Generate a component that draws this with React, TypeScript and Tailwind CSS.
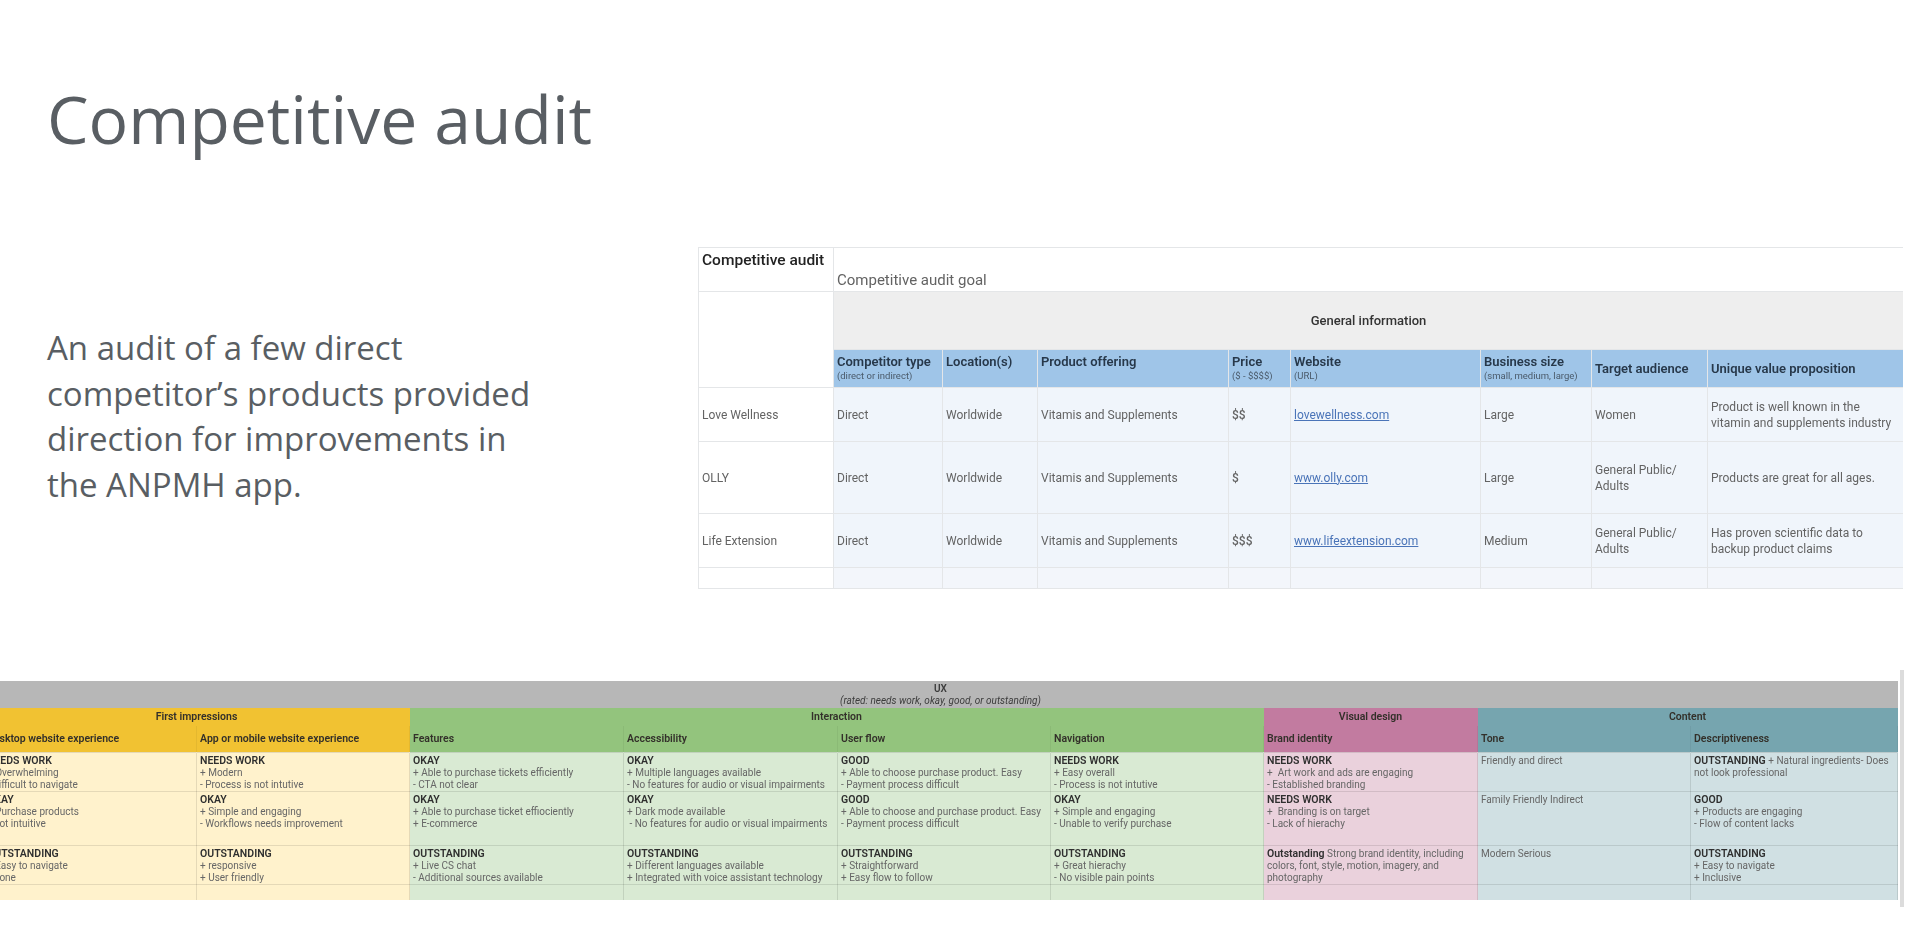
const audit = [
  {
    name: "Love Wellness",
    price: "$$",
    site: "lovewellness.com",
    size: "Large",
    audience: ["Women"],
    value: ["Product is well known in the", "vitamin and supplements industry"],
    rowClass: "h-[54px]",
  },
  {
    name: "OLLY",
    price: "$",
    site: "www.olly.com",
    size: "Large",
    audience: ["General Public/", "Adults"],
    value: ["Products are great for all ages."],
    rowClass: "h-[72px]",
  },
  {
    name: "Life Extension",
    price: "$$$",
    site: "www.lifeextension.com",
    size: "Medium",
    audience: ["General Public/", "Adults"],
    value: ["Has proven scientific data to", "backup product claims"],
    rowClass: "h-[54px]",
  },
];

const columnHeads = [
  { title: "Competitor type", sub: "(direct or indirect)" },
  { title: "Location(s)", sub: " " },
  { title: "Product offering", sub: " " },
  { title: "Price", sub: "($ - $$$$)" },
  { title: "Website", sub: "(URL)" },
  { title: "Business size", sub: "(small, medium, large)" },
];

type Rating = { head?: string; lead?: string; inline?: string; lines?: string[]; plain?: string };

const uxColumns = [
  { tint: "bg-[#fff2cc]", strong: "bg-[#f1c232]" },
  { tint: "bg-[#fff2cc]", strong: "bg-[#f1c232]" },
  { tint: "bg-[#d9ead3]", strong: "bg-[#93c47d]" },
  { tint: "bg-[#d9ead3]", strong: "bg-[#93c47d]" },
  { tint: "bg-[#d9ead3]", strong: "bg-[#93c47d]" },
  { tint: "bg-[#d9ead3]", strong: "bg-[#93c47d]" },
  { tint: "bg-[#ead1dc]", strong: "bg-[#c27ba0]" },
  { tint: "bg-[#d0e0e3]", strong: "bg-[#76a5af]" },
  { tint: "bg-[#d0e0e3]", strong: "bg-[#76a5af]" },
];

const uxHeads = [
  "Desktop website experience",
  "App or mobile website experience",
  "Features",
  "Accessibility",
  "User flow",
  "Navigation",
  "Brand identity",
  "Tone",
  "Descriptiveness",
];

const uxRows: { rowClass: string; cells: Rating[] }[] = [
  {
    rowClass: "h-[38px]",
    cells: [
      { head: "NEEDS WORK", lines: ["+ Overwhelming", "- Difficult to navigate"] },
      { head: "NEEDS WORK", lines: ["+ Modern", "- Process is not intutive"] },
      { head: "OKAY", lines: ["+ Able to purchase tickets efficiently", "- CTA not clear"] },
      { head: "OKAY", lines: ["+ Multiple languages available", "- No features for audio or visual impairments"] },
      { head: "GOOD", lines: ["+ Able to choose purchase product. Easy", "- Payment process difficult"] },
      { head: "NEEDS WORK", lines: ["+ Easy overall", "- Process is not intutive"] },
      { head: "NEEDS WORK", lines: ["+  Art work and ads are engaging", "- Established branding"] },
      { plain: "Friendly and direct" },
      { lead: "OUTSTANDING", inline: " + Natural ingredients- Does not look professional" },
    ],
  },
  {
    rowClass: "h-[54px]",
    cells: [
      { head: "OKAY", lines: ["+ Purchase products", "- Not intuitive"] },
      { head: "OKAY", lines: ["+ Simple and engaging", "- Workflows needs improvement"] },
      { head: "OKAY", lines: ["+ Able to purchase ticket effiociently", "+ E-commerce"] },
      { head: "OKAY", lines: ["+ Dark mode available", " - No features for audio or visual impairments"] },
      { head: "GOOD", lines: ["+ Able to choose and purchase product. Easy", "- Payment process difficult"] },
      { head: "OKAY", lines: ["+ Simple and engaging", "- Unable to verify purchase"] },
      { head: "NEEDS WORK", lines: ["+  Branding is on target", "- Lack of hierachy"] },
      { plain: "Family Friendly Indirect" },
      { head: "GOOD", lines: ["+ Products are engaging", "- Flow of content lacks"] },
    ],
  },
  {
    rowClass: "h-[39px]",
    cells: [
      { head: "OUTSTANDING", lines: ["+ Easy to navigate", "- None"] },
      { head: "OUTSTANDING", lines: ["+ responsive", "+ User friendly"] },
      { head: "OUTSTANDING", lines: ["+ Live CS chat", "- Additional sources available"] },
      { head: "OUTSTANDING", lines: ["+ Different languages available", "+ Integrated with voice assistant technology"] },
      { head: "OUTSTANDING", lines: ["+ Straightforward", "+ Easy flow to follow"] },
      { head: "OUTSTANDING", lines: ["+ Great hierachy", "- No visible pain points"] },
      { lead: "Outstanding", inline: " Strong brand identity, including colors, font, style, motion, imagery, and photography" },
      { plain: "Modern Serious" },
      { head: "OUTSTANDING", lines: ["+ Easy to navigate", "+ Inclusive"] },
    ],
  },
];

const RatingCell = ({ cell }: { cell: Rating }) => {
  if (cell.plain) return <span>{cell.plain}</span>;
  if (cell.lead) {
    return (
      <span>
        <b className="text-[10.5px] font-semibold text-[#2f2f2f]">{cell.lead}</b>
        {cell.inline}
      </span>
    );
  }
  return (
    <>
      <div className="text-[10.5px] font-semibold text-[#2f2f2f]">{cell.head}</div>
      {cell.lines?.map((line) => (
        <div key={line} className="whitespace-pre">{line}</div>
      ))}
    </>
  );
};

const CompetitorTable = () => (
  <table className="w-[1205px] table-fixed border-collapse font-['Roboto',sans-serif] text-[12px] leading-[16px] text-[#636363] blur-[0.4px] [&_td]:border [&_td]:border-[#e4e6e8] [&_td:last-child]:border-r-0">
    <colgroup>
      <col className="w-[135px]" />
      <col className="w-[109px]" />
      <col className="w-[95px]" />
      <col className="w-[191px]" />
      <col className="w-[62px]" />
      <col className="w-[190px]" />
      <col className="w-[111px]" />
      <col className="w-[116px]" />
      <col />
    </colgroup>
    <tbody>
      <tr className="h-[44px]">
        <td className="px-[3px] pb-[20px] text-[15.5px] font-medium text-[#222]">Competitive audit</td>
        <td colSpan={8} className="px-[3px] pt-[20px] text-[15px]">Competitive audit goal</td>
      </tr>
      <tr className="h-[58px]">
        <td rowSpan={2} />
        <td colSpan={8} className="bg-[#eeeeee] text-center text-[13px] font-medium text-[#333]">General information</td>
      </tr>
      <tr className="h-[38px] bg-[#9fc5e8] text-[13px] text-[#27384a]">
        {columnHeads.map((head) => (
          <td key={head.title} className="px-[3px] align-top pt-1">
            <div className="font-semibold leading-[16px]">{head.title}</div>
            <div className="text-[9.5px] leading-[12px] whitespace-pre text-[#4a5a6a]">{head.sub}</div>
          </td>
        ))}
        <td className="px-[3px] font-semibold">Target audience</td>
        <td className="px-[3px] font-semibold">Unique value proposition</td>
      </tr>
      {audit.map((row) => (
        <tr key={row.name} className={row.rowClass}>
          <td className="px-[3px]">{row.name}</td>
          <td className="bg-[#f0f5fb] px-[3px]">Direct</td>
          <td className="bg-[#f0f5fb] px-[3px]">Worldwide</td>
          <td className="bg-[#f0f5fb] px-[3px]">Vitamis and Supplements</td>
          <td className="bg-[#f0f5fb] px-[3px] font-medium">{row.price}</td>
          <td className="bg-[#f0f5fb] px-[3px] text-[#4a74b8] underline">{row.site}</td>
          <td className="bg-[#f0f5fb] px-[3px]">{row.size}</td>
          <td className="bg-[#f0f5fb] px-[3px]">
            {row.audience.map((line) => (
              <div key={line}>{line}</div>
            ))}
          </td>
          <td className="bg-[#f0f5fb] px-[3px]">
            {row.value.map((line) => (
              <div key={line}>{line}</div>
            ))}
          </td>
        </tr>
      ))}
      <tr className="h-[21px]">
        <td />
        <td className="bg-[#f3f6fb]" />
        <td className="bg-[#f3f6fb]" />
        <td className="bg-[#f3f6fb]" />
        <td className="bg-[#f3f6fb]" />
        <td className="bg-[#f3f6fb]" />
        <td className="bg-[#f3f6fb]" />
        <td className="bg-[#f3f6fb]" />
        <td className="bg-[#f3f6fb]" />
      </tr>
    </tbody>
  </table>
);

const UxTable = () => (
  <table className="w-[1915px] shrink-0 table-fixed border-collapse font-['Roboto',sans-serif] text-[10px] leading-[12px] text-[#666666] blur-[0.4px]">
    <colgroup>
      <col className="w-[213px]" />
      <col className="w-[213px]" />
      <col className="w-[214px]" />
      <col className="w-[214px]" />
      <col className="w-[213px]" />
      <col className="w-[213px]" />
      <col className="w-[214px]" />
      <col className="w-[213px]" />
      <col />
    </colgroup>
    <tbody>
      <tr className="h-[27px] bg-[#b7b7b7] text-center leading-[12px] text-[#3c3c3c]">
        <td colSpan={9}>
          <div className="font-semibold">UX</div>
          <div className="italic">(rated: needs work, okay, good, or outstanding)</div>
        </td>
      </tr>
      <tr className="h-[18px] text-center text-[10.5px] font-semibold text-[#33302a]">
        <td colSpan={2} className="bg-[#f1c232]">First impressions</td>
        <td colSpan={4} className="bg-[#93c47d]">Interaction</td>
        <td className="bg-[#c27ba0]">Visual design</td>
        <td colSpan={2} className="bg-[#76a5af]">Content</td>
      </tr>
      <tr className="h-[26px] text-[10.5px] font-semibold text-[#33302a]">
        {uxHeads.map((head, i) => (
          <td key={head} className={`${uxColumns[i].strong} border-x border-black/5 px-[3px]`}>{head}</td>
        ))}
      </tr>
      {uxRows.map((row) => (
        <tr key={row.rowClass + row.cells[2].lines?.[0]} className={row.rowClass}>
          {row.cells.map((cell, i) => (
            <td key={i} className={`${uxColumns[i].tint} border border-black/10 px-[3px] pt-[2px] align-top`}>
              <RatingCell cell={cell} />
            </td>
          ))}
        </tr>
      ))}
      <tr className="h-[16px]">
        {uxColumns.map((col, i) => (
          <td key={i} className={`${col.tint} border-x border-black/10`} />
        ))}
      </tr>
    </tbody>
  </table>
);

const App = () => {
  return (
    <div className="h-[927px] w-[1920px] overflow-hidden bg-white font-['Open_Sans',sans-serif] text-[#595e63]">
      <h1 className="ml-[47px] pt-[73px] text-[66px] leading-[90px]">Competitive audit</h1>

      <div className="mt-[84px] flex">
        <p className="ml-[47px] mt-[78px] mb-[-1px] w-[651px] shrink-0 text-[33px] leading-[45.5px]">
          An audit of a few direct<br />
          competitor’s products provided<br />
          direction for improvements in<br />
          the ANPMH app.
        </p>
        <CompetitorTable />
      </div>

      {/* the sheet runs off the left edge of the slide */}
      <div className="relative mt-[92px] ml-[-17px] flex">
        <UxTable />
        <div className="absolute left-[1917px] top-[-11px] h-[237px] w-[4px] bg-[#dcdcdc]" />
      </div>
    </div>
  );
};

export default App;
